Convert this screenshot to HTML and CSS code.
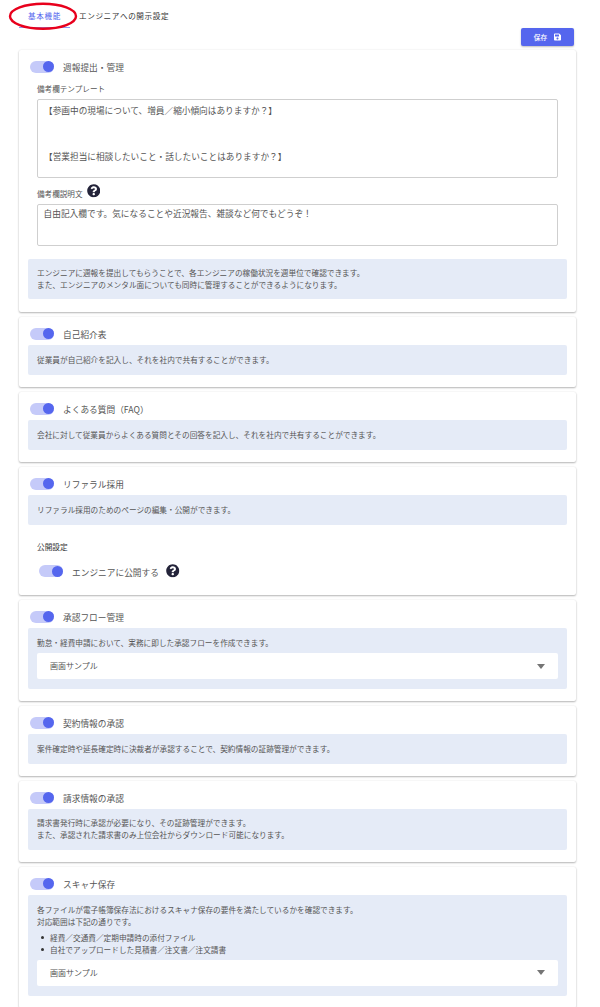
FILE: index.html
```html
<!DOCTYPE html>
<html lang="ja">
<head>
<meta charset="utf-8">
<title>基本機能</title>
<link rel="stylesheet" href="styles.css">
</head>
<body>
<svg class="defs" width="0" height="0" aria-hidden="true">
  <symbol id="help" viewBox="0 0 512 512"><path d="M504 256c0 136.997-111.043 248-248 248S8 392.997 8 256C8 119.083 119.043 8 256 8s248 111.083 248 248zM262.655 90c-54.497 0-89.255 22.957-116.549 63.758-3.536 5.286-2.353 12.415 2.715 16.258l34.699 26.31c5.205 3.947 12.621 3.008 16.665-2.122 17.864-22.658 30.113-35.797 57.303-35.797 20.429 0 45.698 13.148 45.698 32.958 0 14.976-12.363 22.667-32.534 33.976C247.128 238.528 216 254.941 216 296v4c0 6.627 5.373 12 12 12h56c6.627 0 12-5.373 12-12v-1.333c0-28.462 83.186-29.647 83.186-106.667 0-58.002-60.165-102-116.531-102zM256 338c-25.365 0-46 20.635-46 46 0 25.364 20.635 46 46 46s46-20.636 46-46c0-25.365-20.635-46-46-46z"/></symbol>
</svg>
<nav class="tabs">
  <div class="tab tab-active">基本機能</div>
  <div class="tab">エンジニアへの開示設定</div>
  <svg class="ring" viewBox="0 0 68 28" aria-hidden="true"><ellipse cx="34" cy="14.3" rx="33" ry="12.5"/></svg>
</nav>
<div class="actions">
  <button class="save">保存
    <svg class="save-icon" viewBox="0 0 448 512"><path d="M433.941 129.941l-83.882-83.882A48 48 0 0 0 316.118 32H48C21.49 32 0 53.49 0 80v352c0 26.51 21.49 48 48 48h352c26.51 0 48-21.49 48-48V163.882a48 48 0 0 0-14.059-33.941zM224 416c-35.346 0-64-28.654-64-64 0-35.346 28.654-64 64-64s64 28.654 64 64c0 35.346-28.654 64-64 64zm96-304.52V212c0 6.627-5.373 12-12 12H76c-6.627 0-12-5.373-12-12V108c0-6.627 5.373-12 12-12h228.52c3.183 0 6.235 1.264 8.485 3.515l3.48 3.48A11.996 11.996 0 0 1 320 111.48z"/></svg>
  </button>
</div>
<main class="list">
  <section class="card card-weekly">
    <div class="head"><span class="switch"></span><span class="title">週報提出・管理</span></div>
    <div class="label label-first">備考欄テンプレート</div>
    <div class="textbox textbox-tall">
      <p>【参画中の現場について、増員／縮小傾向はありますか？】</p>
      <p class="second">【営業担当に相談したいこと・話したいことはありますか？】</p>
    </div>
    <div class="label label-help">備考欄説明文 <svg class="help"><use href="#help"/></svg></div>
    <div class="textbox textbox-short">自由記入欄です。気になることや近況報告、雑談など何でもどうぞ！</div>
    <div class="info info-two info-spaced">エンジニアに週報を提出してもらうことで、各エンジニアの稼働状況を週単位で確認できます。<br>また、エンジニアのメンタル面についても同時に管理することができるようになります。</div>
  </section>
  <section class="card">
    <div class="head"><span class="switch"></span><span class="title">自己紹介表</span></div>
    <div class="info">従業員が自己紹介を記入し、それを社内で共有することができます。</div>
  </section>
  <section class="card">
    <div class="head"><span class="switch"></span><span class="title">よくある質問（FAQ）</span></div>
    <div class="info">会社に対して従業員からよくある質問とその回答を記入し、それを社内で共有することができます。</div>
  </section>
  <section class="card">
    <div class="head"><span class="switch"></span><span class="title">リファラル採用</span></div>
    <div class="info">リファラル採用のためのページの編集・公開ができます。</div>
    <div class="pub-label">公開設定</div>
    <div class="pub-row"><span class="switch"></span><span class="title">エンジニアに公開する</span><svg class="help"><use href="#help"/></svg></div>
  </section>
  <section class="card">
    <div class="head"><span class="switch"></span><span class="title">承認フロー管理</span></div>
    <div class="info info-select">勤怠・経費申請において、実務に即した承認フローを作成できます。
      <div class="select"><span>画面サンプル</span><span class="arrow"></span></div>
    </div>
  </section>
  <section class="card">
    <div class="head"><span class="switch"></span><span class="title">契約情報の承認</span></div>
    <div class="info">案件確定時や延長確定時に決裁者が承認することで、契約情報の証跡管理ができます。</div>
  </section>
  <section class="card">
    <div class="head"><span class="switch"></span><span class="title">請求情報の承認</span></div>
    <div class="info info-two info-small">請求書発行時に承認が必要になり、その証跡管理ができます。<br>また、承認された請求書のみ上位会社からダウンロード可能になります。</div>
  </section>
  <section class="card">
    <div class="head"><span class="switch"></span><span class="title">スキャナ保存</span></div>
    <div class="info info-select">各ファイルが電子帳簿保存法におけるスキャナ保存の要件を満たしているかを確認できます。<br>対応範囲は下記の通りです。
      <ul>
        <li>経費／交通費／定期申請時の添付ファイル</li>
        <li>自社でアップロードした見積書／注文書／注文請書</li>
      </ul>
      <div class="select"><span>画面サンプル</span><span class="arrow"></span></div>
    </div>
  </section>
</main>
</body>
</html>
```
FILE: styles.css
```css
* { box-sizing: border-box; }
html, body { height: 1007px; overflow: hidden; }
body {
  margin: 0;
  background: #fff;
  color: #4a4a4a;
  font-family: "Noto Sans CJK JP", "Noto Sans", sans-serif;
  font-size: 7.66px;
}
.defs { position: absolute; }
.tabs {
  position: relative;
  display: flex;
  height: 28px;
  padding-left: 19px;
}
.tab {
  width: 51px;
  padding-top: 10px;
  text-align: center;
  font-size: 7.6px;
  letter-spacing: 0.6px;
  color: #333;
  white-space: nowrap;
}
.tab + .tab { width: auto; margin-left: 9px; }
.tab-active { color: #5566ee; border-bottom: 1px solid #8d99f2; }
.ring {
  position: absolute;
  left: 9px;
  top: 2px;
  width: 68px;
  height: 28px;
  fill: none;
  stroke: #e8001c;
  stroke-width: 2.4;
  overflow: visible;
}
.actions {
  display: flex;
  justify-content: flex-end;
  height: 22px;
  padding-right: 26px;
}
.save {
  display: flex;
  align-items: center;
  justify-content: center;
  gap: 7px;
  width: 53px;
  height: 18px;
  border: 0;
  border-radius: 2px;
  background: #5566ee;
  color: #fff;
  font: 500 6.7px "Noto Sans CJK JP", sans-serif;
  box-shadow: 0 1px 2px rgba(0, 0, 0, .25);
}
.save-icon { width: 7px; height: 8px; fill: #fff; }
.list {
  display: flex;
  flex-direction: column;
  gap: 5px;
  margin: 0 24px 0 19px;
}
.card {
  flex: none;
  padding: 0 9px 12px;
  border-radius: 2px;
  background: #fff;
  box-shadow: 0 1px 2px rgba(0, 0, 0, .28), 0 0 2px rgba(0, 0, 0, .08);
}
.card-weekly { padding-bottom: 13px; }
.head {
  display: flex;
  align-items: center;
  height: 28px;
  padding: 5px 0 0 2px;
}
.switch {
  position: relative;
  flex: none;
  width: 24px;
  height: 12px;
  border-radius: 6px;
  background: #c5caf9;
}
.switch::after {
  content: "";
  position: absolute;
  right: .5px;
  top: .5px;
  width: 11px;
  height: 11px;
  border-radius: 50%;
  background: #5566ee;
}
.title {
  margin: 2px 0 0 9px;
  font-size: 8.7px;
  color: #555;
  white-space: nowrap;
}
.label {
  margin-left: 9px;
  font-size: 7.6px;
  color: #555;
}
.label-first { line-height: 12px; margin-top: 5px; margin-bottom: 4px; }
.label-help {
  display: flex;
  align-items: center;
  gap: 4px;
  height: 20px;
  margin-top: 5px;
  margin-bottom: 1px;
}
.help { width: 13.5px; height: 13.5px; fill: #24243a; flex: none; margin-top: -4px; }
.textbox {
  margin: 0 9px;
  border: 1px solid #cfcfcf;
  border-radius: 2px;
  color: #555;
  white-space: nowrap;
}
.textbox p { margin: 0; }
.textbox-tall { height: 79px; padding: 3px 6px; font-size: 8.67px; line-height: 14px; }
.textbox-tall .second { margin-top: 32px; }
.textbox-short { height: 41.5px; padding: 2px 5.5px; font-size: 8.7px; line-height: 14px; }
.info {
  padding: 9px;
  border-radius: 2px;
  background: #e5ebf7;
  line-height: 12px;
  color: #555;
  white-space: nowrap;
}
.info-two { padding-top: 8px; padding-bottom: 8px; }
.info-small { padding-bottom: 9px; }
.info-spaced { margin-top: 13.5px; }
.info-select { padding-bottom: 10px; }
.select {
  display: flex;
  align-items: center;
  justify-content: space-between;
  height: 26px;
  margin-top: 4px;
  padding: 0 13px;
  border-radius: 2px;
  background: #fff;
  font-size: 8px;
}
.arrow {
  width: 0;
  height: 0;
  border-left: 4px solid transparent;
  border-right: 4px solid transparent;
  border-top: 5px solid #757575;
}
ul { margin: 4px 0 4.5px; padding: 0 0 0 4px; list-style: none; }
li { display: flex; align-items: center; gap: 6px; line-height: 11.5px; }
li::before {
  content: "";
  width: 3px;
  height: 3px;
  border-radius: 50%;
  background: #333;
}
.pub-label { margin: 16px 0 0 9px; color: #333; line-height: 12px; }
.pub-row {
  display: flex;
  align-items: center;
  height: 22px;
  margin: 7px 0 1px;
  padding-left: 11px;
}
.pub-row .help { margin: 0 0 0 7.5px; }
```
